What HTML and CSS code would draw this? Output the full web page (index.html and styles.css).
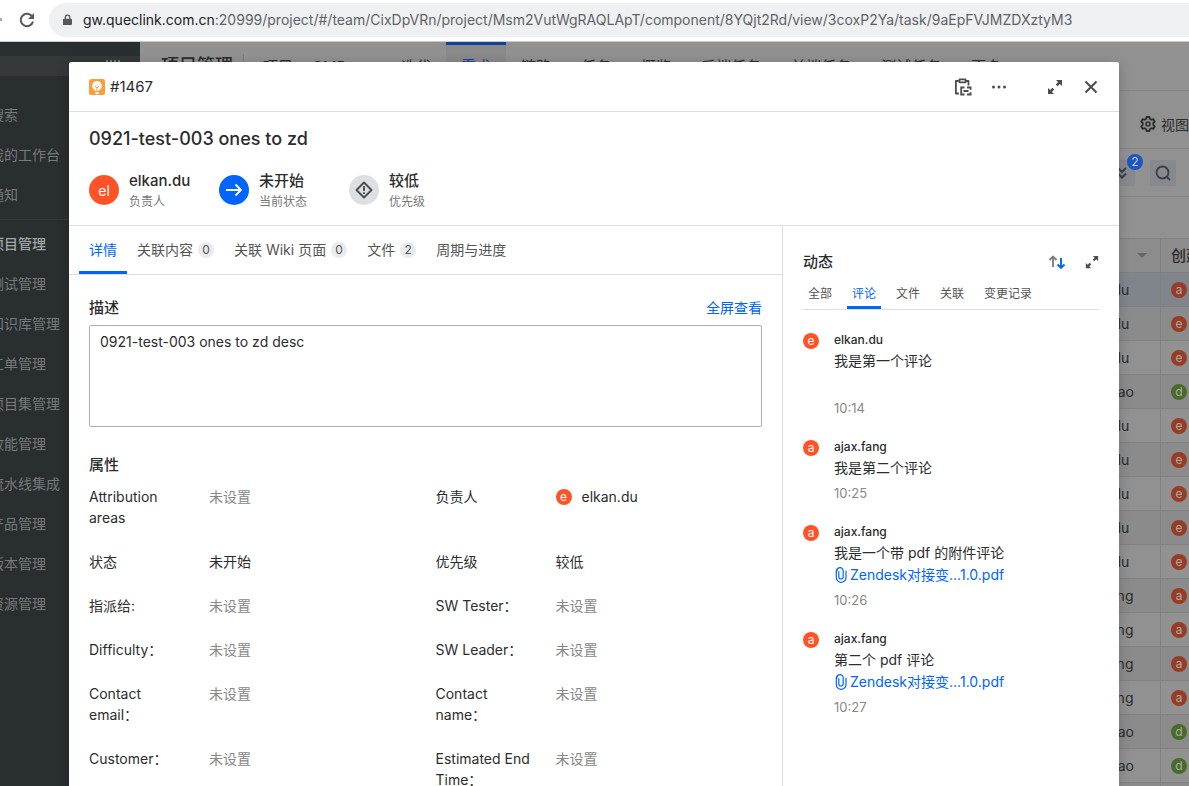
FILE: index.html
```html
<!DOCTYPE html>
<html lang="zh-CN">
<head>
<meta charset="utf-8">
<title>#1467 0921-test-003 ones to zd</title>
<link rel="stylesheet" href="styles.css">
</head>
<body>
<svg class="defs" aria-hidden="true">
  <symbol id="expand" viewBox="0 0 16 16"><path d="M9 1h6v6l-2.100-2.100-2.300 2.300-1.800-1.800 2.300-2.300zM7 15H1V9l2.100 2.100 2.300-2.300 1.800 1.800-2.300 2.300z"/></symbol>
  <symbol id="clip" viewBox="0 0 13 16"><path d="M4.300 4.500v5.300a2.200 2.200 0 0 0 4.400 0V3.800a3.100 3.100 0 0 0-6.200 0M11.500 4v6.500a4.800 4.800 0 0 1-9.700 0V4a3 3 0 0 1 3-3" fill="none" stroke="currentColor" stroke-width="1.200" stroke-linecap="round"/></symbol>
</svg>
<header class="browser">
  <span class="dot"></span>
  <button class="reload" aria-label="刷新"><svg viewBox="0 0 16 16"><path d="M13.200 4.600A6.200 6.200 0 1 0 14 9.500" fill="none" stroke="currentColor" stroke-width="2"/><path d="M15 1v6H9z"/></svg></button>
  <div class="address">
    <svg class="lock" viewBox="0 0 10 13"><path d="M1 5h8a1 1 0 0 1 1 1v5a1 1 0 0 1-1 1H1a1 1 0 0 1-1-1V6a1 1 0 0 1 1-1z"/><path d="M2.500 5.500V3.500a2.500 2.500 0 0 1 5 0v2" fill="none" stroke="currentColor" stroke-width="1.400"/></svg>
    <span class="url"><b>gw.queclink.com.cn</b>:20999/project/#/team/CixDpVRn/project/Msm2VutWgRAQLApT/component/8YQjt2Rd/view/3coxP2Ya/task/9aEpFVJMZDXztyM3</span>
  </div>
</header>
<div class="app">
  <nav class="sidebar">
    <div class="brand"><svg viewBox="0 0 16 12"><path d="M2 1v8M6 1v8M10 1v8M14 1v8" stroke="currentColor" stroke-width="2"/></svg></div>
    <ul>
      <li>搜索</li><li>我的工作台</li><li>通知</li>
    </ul>
    <ul class="modules">
      <li class="current">项目管理</li><li>测试管理</li><li>知识库管理</li><li>工单管理</li><li>项目集管理</li><li>效能管理</li><li>流水线集成</li><li>产品管理</li><li>版本管理</li><li>资源管理</li>
    </ul>
  </nav>
  <main class="page">
    <div class="topbar">
      <h2>项目管理</h2>
      <span class="crumb">项目</span><span class="crumb project">CMP</span>
      <div class="toptabs">
        <span>迭代</span><span class="on">需求</span><span>链路</span><span>任务</span><span>概览</span><span>后端任务</span><span>前端任务</span><span>测试任务</span><span>更多</span>
      </div>
    </div>
    <div class="viewbar">
      <svg viewBox="0 0 16 16"><path d="M6.600 1h2.800l.5 2 1.500.8 2-.6 1.400 2.400L13.300 7v2l1.500 1.400-1.400 2.400-2-.6-1.500.8-.5 2H6.600l-.5-2-1.500-.8-2 .6-1.400-2.400L2.700 9V7L1.200 5.600l1.400-2.400 2 .6L6.100 3z" fill="none" stroke="currentColor" stroke-width="1.800" stroke-linejoin="round"/><circle cx="8" cy="8" r="2" fill="none" stroke="currentColor" stroke-width="1.600"/></svg>
      <span>视图</span>
    </div>
    <div class="filterbar">
      <button class="tool" aria-label="展开"><svg viewBox="0 0 16 16"><path d="M4 3l4 4 4-4M4 8.500l4 4 4-4" fill="none" stroke="currentColor" stroke-width="2"/></svg><span class="count">2</span></button>
      <button class="tool" aria-label="查找"><svg viewBox="0 0 16 16"><circle cx="7.500" cy="7.500" r="6" fill="none" stroke="currentColor" stroke-width="1.800"/><path d="M11.500 11.500l3.500 3.500" stroke="currentColor" stroke-width="1.800"/></svg></button>
    </div>
    <table class="grid">
      <thead><tr><th></th><th class="who"><i class="caret"></i></th><th class="by">创建者</th></tr></thead>
      <tbody>
        <tr class="picked"><td></td><td>elkan.du</td><td><i class="ava">a</i></td></tr>
        <tr><td></td><td>elkan.du</td><td><i class="ava">e</i></td></tr>
        <tr><td></td><td>elkan.du</td><td><i class="ava">e</i></td></tr>
        <tr><td></td><td>dan.zhao</td><td><i class="ava green">d</i></td></tr>
        <tr><td></td><td>elkan.du</td><td><i class="ava">e</i></td></tr>
        <tr><td></td><td>elkan.du</td><td><i class="ava">e</i></td></tr>
        <tr><td></td><td>elkan.du</td><td><i class="ava">e</i></td></tr>
        <tr><td></td><td>elkan.du</td><td><i class="ava">e</i></td></tr>
        <tr><td></td><td>elkan.du</td><td><i class="ava">e</i></td></tr>
        <tr><td></td><td>ajax.fang</td><td><i class="ava">a</i></td></tr>
        <tr><td></td><td>ajax.fang</td><td><i class="ava">a</i></td></tr>
        <tr><td></td><td>ajax.fang</td><td><i class="ava">a</i></td></tr>
        <tr><td></td><td>ajax.fang</td><td><i class="ava">a</i></td></tr>
        <tr><td></td><td>dan.zhao</td><td><i class="ava green">d</i></td></tr>
        <tr><td></td><td>dan.zhao</td><td><i class="ava green">d</i></td></tr>
        <tr><td></td><td></td><td></td></tr>
      </tbody>
    </table>
  </main>
  <div class="overlay">
    <section class="dialog" role="dialog" aria-label="#1467">
      <header class="bar">
        <svg class="kind" viewBox="0 0 16 16"><rect width="16" height="16" rx="2.500" fill="#ff9c35"/><path d="M8 2a4.800 4.800 0 0 0-3 8.500c.7.500 1 1 1 1.500h4c0-.500.300-1 1-1.500A4.800 4.800 0 0 0 8 2zM6.300 13h3.400v.7a1.700 1.700 0 0 1-3.400 0z" fill="#fff"/><path d="M6 7l2 2 2-2M8 9v3" fill="none" stroke="#ff9c35"/></svg>
        <span class="id">#1467</span>
        <button class="icon copy" aria-label="复制链接"><svg viewBox="0 0 18 18"><path d="M4.500 3H1.900v12.500h3M12 3h2.500v4.500M5.500 1.300h6v3h-6z" fill="none" stroke="currentColor" stroke-width="1.800" stroke-linejoin="round"/><path d="M10.500 9.500H7.200v7h3.300M13 9.500h3.600v2.200M13 16.500h3.600v-2.200M9.500 13h5" fill="none" stroke="currentColor" stroke-width="1.800"/></svg></button>
        <button class="icon more" aria-label="更多"><svg viewBox="0 0 16 16"><circle cx="2.500" cy="8" r="1.500"/><circle cx="8" cy="8" r="1.500"/><circle cx="13.500" cy="8" r="1.500"/></svg></button>
        <button class="icon full" aria-label="全屏"><svg><use href="#expand"/></svg></button>
        <button class="icon" aria-label="关闭"><svg viewBox="0 0 16 16"><path d="M2.500 2.500l11 11M13.500 2.500l-11 11" stroke="currentColor" stroke-width="2"/></svg></button>
      </header>
      <div class="summary">
        <h1>0921-test-003 ones to zd</h1>
        <div class="facts">
          <div class="fact"><span class="disc red">el</span><div><strong>elkan.du</strong><small>负责人</small></div></div>
          <div class="fact"><span class="disc blue"><svg viewBox="0 0 16 16"><path d="M0 8h15M9.500 2.500L15 8l-5.500 5.500" fill="none" stroke="currentColor" stroke-width="1.900"/></svg></span><div><strong>未开始</strong><small>当前状态</small></div></div>
          <div class="fact"><span class="disc grey"><svg class="wide" viewBox="0 0 18 18"><path d="M9 1.500L16.500 9 9 16.500 1.500 9zM9 5v5M9 11.300v1.800" fill="none" stroke="currentColor" stroke-width="1.900" stroke-linejoin="round"/></svg></span><div><strong>较低</strong><small>优先级</small></div></div>
        </div>
      </div>
      <div class="body">
        <div class="left">
          <nav class="tabs">
            <button class="on">详情</button>
            <button>关联内容<span>0</span></button>
            <button>关联 Wiki 页面<span>0</span></button>
            <button>文件<span>2</span></button>
            <button>周期与进度</button>
          </nav>
          <div class="detail">
            <div class="head"><h3>描述</h3><a href="#full">全屏查看</a></div>
            <div class="desc">0921-test-003 ones to zd desc</div>
            <h3 class="props-title">属性</h3>
            <dl class="props">
              <div><dt>Attribution areas</dt><dd class="none">未设置</dd></div>
              <div><dt>负责人</dt><dd class="user"><i class="ava live">e</i>elkan.du</dd></div>
              <div><dt>状态</dt><dd>未开始</dd></div>
              <div><dt>优先级</dt><dd>较低</dd></div>
              <div><dt>指派给:</dt><dd class="none">未设置</dd></div>
              <div><dt>SW Tester：</dt><dd class="none">未设置</dd></div>
              <div><dt>Difficulty：</dt><dd class="none">未设置</dd></div>
              <div><dt>SW Leader：</dt><dd class="none">未设置</dd></div>
              <div><dt>Contact email：</dt><dd class="none">未设置</dd></div>
              <div><dt>Contact name：</dt><dd class="none">未设置</dd></div>
              <div><dt>Customer：</dt><dd class="none">未设置</dd></div>
              <div><dt>Estimated End Time：</dt><dd class="none">未设置</dd></div>
            </dl>
          </div>
        </div>
        <aside class="feed">
          <div class="feed-head">
            <h3>动态</h3>
            <button class="icon sort" aria-label="排序"><svg viewBox="0 0 18 16"><path d="M5 13V3M1.500 6L5 2.500 8.500 6" fill="none" stroke="#7d8082" stroke-width="1.900"/><path d="M13 4v10M9.500 10.500L13 14l3.500-3.500" fill="none" stroke="#0064ff" stroke-width="1.900"/></svg></button>
            <button class="icon small" aria-label="展开动态"><svg><use href="#expand"/></svg></button>
          </div>
          <nav class="subtabs"><button>全部</button><button class="on">评论</button><button>文件</button><button>关联</button><button>变更记录</button></nav>
          <article class="comment"><i class="ava live">e</i><div><strong>elkan.du</strong><p>我是第一个评论<br><br></p><time>10:14</time></div></article>
          <article class="comment"><i class="ava live">a</i><div><strong>ajax.fang</strong><p>我是第二个评论</p><time>10:25</time></div></article>
          <article class="comment"><i class="ava live">a</i><div><strong>ajax.fang</strong><p>我是一个带 pdf 的附件评论</p><a href="#pdf1"><svg><use href="#clip"/></svg>Zendesk对接变...1.0.pdf</a><time>10:26</time></div></article>
          <article class="comment"><i class="ava live">a</i><div><strong>ajax.fang</strong><p>第二个 pdf 评论</p><a href="#pdf2"><svg><use href="#clip"/></svg>Zendesk对接变...1.0.pdf</a><time>10:27</time></div></article>
        </aside>
      </div>
    </section>
  </div>
</div>
</body>
</html>
```
FILE: styles.css
```css
* { box-sizing: border-box; }
body {
  margin: 0;
  height: 100vh;
  display: flex;
  flex-direction: column;
  overflow: hidden;
  background: #fff;
  color: #2b2d2e;
  font: 14px/21px Inter, "Noto Sans CJK SC", sans-serif;
}
h1, h2, h3, p, ul, dl, dd { margin: 0; padding: 0; }
ul { list-style: none; }
button { border: 0; padding: 0; background: none; color: inherit; font: inherit; }
a { color: #0064ff; text-decoration: none; }
svg { display: block; fill: currentColor; }
i { font-style: normal; }
.defs { position: absolute; width: 0; height: 0; }

.browser {
  flex: none;
  display: flex;
  align-items: center;
  height: 42px;
  padding-bottom: 2px;
  border-bottom: 1px solid #c8cacc;
  color: #55585c;
}
.dot { width: 2px; height: 3px; margin-right: 17px; background: #aaa; }
.reload svg { width: 16px; height: 16px; }
.address {
  flex: 1;
  min-width: 0;
  display: flex;
  align-items: center;
  gap: 11px;
  height: 34px;
  margin-left: 14px;
  padding-left: 14px;
  border-radius: 17px 0 0 17px;
  background: #eff0f2;
}
.lock { width: 9px; height: 12px; }
.url { white-space: nowrap; font-size: 14px; color: #5f6368; }
.url b { font-weight: 400; color: #202124; }

.app { flex: 1; min-height: 0; position: relative; display: flex; overflow: hidden; }
.sidebar { flex: none; width: 140px; background: #292e30; color: #77797a; }
.brand {
  height: 20px;
  margin: 14px 0 19px;
  padding: 3px 0 0 105px;
  background: #34383a;
}
.brand svg { width: 16px; height: 12px; }
.sidebar li { margin-left: -10px; line-height: 40px; white-space: nowrap; }
.modules { margin-top: 4px; padding-top: 4px; border-top: 1px solid #33383a; }
.sidebar .current { color: #a2a4a5; font-weight: 500; }

.page { flex: 1; min-width: 0; overflow: hidden; background: #919191; color: #2b2c2d; }
.topbar {
  display: flex;
  align-items: center;
  height: 49px;
  padding-left: 21px;
  border-bottom: 1px solid #828486;
  white-space: nowrap;
  font-size: 15px;
}
.topbar h2 { padding-right: 10px; border-right: 1px solid #808080; font-size: 18px; font-weight: 500; line-height: 24px; }
.crumb { padding-left: 19px; }
.project { width: 93px; }
.toptabs { display: flex; height: 48px; }
.toptabs span { padding: 0 15px; border-top: 3px solid transparent; line-height: 44px; }
.toptabs .on { border-color: #114198; background: #8a8a8a; color: #114198; }
.viewbar {
  display: flex;
  align-items: center;
  justify-content: flex-end;
  gap: 5px;
  height: 58px;
  padding-top: 9px;
  border-bottom: 1px solid #828486;
}
.viewbar svg { width: 16px; height: 16px; }
.filterbar {
  display: flex;
  align-items: center;
  justify-content: flex-end;
  gap: 15px;
  height: 48px;
  padding-right: 13px;
  border-bottom: 1px solid #828486;
}
.tool { position: relative; width: 26px; height: 26px; padding: 5px; border-radius: 2px; background: #868a8f; color: #3d4042; }
.tool svg { width: 16px; height: 16px; }
.count {
  position: absolute;
  top: -6px;
  right: -8px;
  width: 16px;
  border-radius: 8px;
  background: #1a57c0;
  color: #ccc;
  font-size: 12px;
  line-height: 16px;
}
.grid {
  width: calc(100% + 72px);
  margin-top: 41px;
  table-layout: fixed;
  border-collapse: collapse;
}
.grid th, .grid td { height: 34px; padding: 0 0 0 10px; border: 1px solid #808080; text-align: left; }
.grid th { background: #8c8c8c; font-size: 15px; font-weight: 500; }
.grid .who { width: 98px; }
.grid .by { width: 100px; }
.grid tr:nth-child(even) { background: #8b8b8b; }
.grid .picked { background: #80858c; }
.caret { display: block; margin-left: 64px; width: 10px; border: 5px solid transparent; border-top-color: #666; border-bottom: 0; }
.ava {
  flex: none;
  display: block;
  width: 16px;
  height: 16px;
  border-radius: 50%;
  background: #983d25;
  color: #aaa;
  font-size: 12px;
  line-height: 16px;
  text-align: center;
}
.ava.green { background: #496b2a; }
.ava.live { background: #ff5226; color: #fff; }

.overlay { position: absolute; inset: 0; display: flex; padding: 20px 70px 0 69px; }
.dialog {
  flex: 1;
  min-width: 0;
  display: flex;
  flex-direction: column;
  border-radius: 2px 2px 0 0;
  background: #fff;
  box-shadow: 0 2px 12px rgba(0, 0, 0, 0.2);
}
.bar { flex: none; display: flex; align-items: center; height: 50px; padding: 0 20px; border-bottom: 1px solid #dcdee0; }
.kind { width: 16px; height: 16px; margin-right: 5px; }
.id { font-size: 15px; }
.icon { color: #4b4d4f; }
.icon svg { width: 16px; height: 16px; }
.icon.copy { margin-left: auto; }
.icon.copy svg { width: 18px; height: 18px; }
.more { margin: 0 40px 0 19px; }
.full { margin-right: 20px; }
.summary { flex: none; padding: 15px 20px 12px; border-bottom: 1px solid #dcdee0; }
.summary h1 { font-size: 18px; font-weight: 500; line-height: 24px; }
.facts { display: flex; margin-top: 20px; }
.fact { display: flex; gap: 10px; width: 130px; }
.disc { display: flex; align-items: center; justify-content: center; width: 30px; height: 30px; margin-top: 4px; border-radius: 50%; }
.disc svg { width: 16px; height: 16px; }
.disc .wide { width: 18px; height: 18px; }
.red { background: #ff5226; color: #fff; }
.blue { background: #0064ff; color: #fff; }
.grey { background: #dcdfe3; color: #4b4d4f; }
.fact strong { display: block; font-size: 15px; font-weight: 500; line-height: 20px; }
.fact small { display: block; color: #777; font-size: 12px; line-height: 22px; }

.body { flex: 1; min-height: 0; display: flex; }
.left { flex: 1; min-width: 0; overflow: hidden; border-right: 1px solid #dcdee0; }
.tabs { display: flex; padding: 0 10px; border-bottom: 1px solid #dcdee0; color: #555; }
.tabs button { display: flex; align-items: center; gap: 5px; height: 48px; padding: 2px 10px 0; border-bottom: 3px solid transparent; }
.tabs button span { width: 16px; border-radius: 8px; background: #e9ebee; font-size: 12px; line-height: 16px; }
.tabs .on, .subtabs .on { border-color: #0064ff; color: #0064ff; }
.detail { padding: 20px; }
h3 { font-size: 15px; font-weight: 500; line-height: 24px; }
.head { display: flex; justify-content: space-between; align-items: center; height: 30px; padding-bottom: 5px; }
.desc { height: 102px; padding: 5px 10px; border: 1px solid #b0b0b0; border-radius: 2px; }
.props-title { margin: 26px 0 9px; }
.props { display: grid; grid-template-columns: 1fr 1fr; gap: 23px 20px; }
.props > div { display: flex; gap: 20px; }
.props dt { flex: none; width: 100px; }
.none { color: #888; }
.user { display: flex; align-items: center; gap: 10px; height: 21px; }

.feed { flex: none; width: 336px; padding: 24px 20px; }
.feed-head { display: flex; align-items: center; height: 24px; }
.sort { margin-left: auto; }
.icon.sort svg { width: 18px; }
.small { margin-left: 19px; }
.icon.small svg { width: 14px; height: 14px; }
.subtabs { display: flex; gap: 10px; margin-bottom: 20px; border-bottom: 1px solid #dcdee0; color: #555; font-size: 12px; }
.subtabs button { height: 35px; padding: 7px 5px 0; border-bottom: 3px solid transparent; }
.comment { display: flex; gap: 15px; margin-bottom: 19px; }
.comment .ava { margin-top: 3px; }
.comment strong { display: block; font-size: 12px; font-weight: 500; line-height: 20px; }
.comment p { line-height: 22px; }
.comment a { display: flex; align-items: center; line-height: 22px; }
.comment a svg { width: 14px; height: 16px; margin-right: 2px; }
.comment time { display: block; margin-top: 4px; color: #888; font-size: 13px; line-height: 20px; }
```
